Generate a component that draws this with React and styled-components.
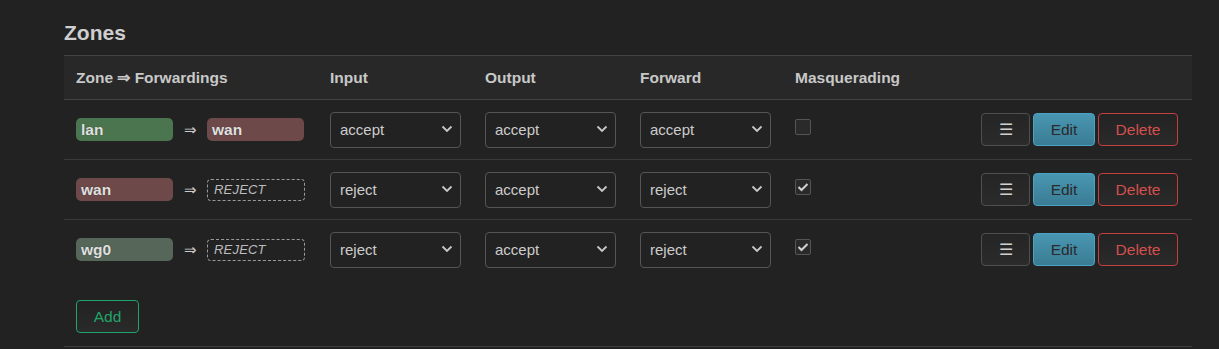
import styled, { createGlobalStyle } from 'styled-components';

const GlobalStyle = createGlobalStyle`
  html, body {
    margin: 0;
    padding: 0;
    background: #222222;
    color: #cccccc;
    font-family: "Liberation Sans", Arial, sans-serif;
  }
`;

const Page = styled.div`
  padding: 20px 27px 0 64px;
`;

const Title = styled.h2`
  margin: 0 0 9px;
  font-size: 21px;
  line-height: 26px;
  font-weight: bold;
  color: #cfcfcf;
`;

const Section = styled.div`
  border-bottom: 1px solid #3f3f3f;
  padding-bottom: 13px;
`;

const Grid = styled.div`
  display: grid;
  grid-template-columns: 254px 155px 155px 155px 1fr auto;
`;

const HeadCell = styled.div`
  background: #282828;
  border-top: 1px solid #424242;
  border-bottom: 1px solid #424242;
  height: 43px;
  display: flex;
  align-items: center;
  padding-left: 12px;
  font-size: 15.5px;
  font-weight: bold;
  color: #c8c8c8;
`;

const Cell = styled.div`
  height: 59px;
  display: flex;
  align-items: center;
  padding-left: 12px;
  border-bottom: ${p => (p.$last ? '1px solid transparent' : '1px solid #3a3a3a')};
  justify-content: ${p => (p.$right ? 'flex-end' : 'flex-start')};
  padding-right: ${p => (p.$right ? '14px' : '0')};
  gap: ${p => (p.$right ? '3px' : '0')};
`;

const zoneColors = {
  lan: '#4b754e',
  wan: '#6d4a49',
  wg0: '#566659',
};

const Badge = styled.span`
  box-sizing: border-box;
  width: 97px;
  height: 23px;
  border-radius: 5px;
  padding-left: 5px;
  display: flex;
  align-items: center;
  font-size: 15.5px;
  font-weight: bold;
  color: #e0e0e0;
  text-shadow: 0 0 1px rgba(0, 0, 0, 0.5);
  background: ${p => zoneColors[p.$zone] || '#555'};
`;

const Reject = styled.span`
  box-sizing: border-box;
  width: 98px;
  height: 22px;
  border: 1px dashed #9a9a9a;
  border-radius: 4px;
  padding-left: 6px;
  display: flex;
  align-items: center;
  font-size: 13px;
  font-style: italic;
  color: #bdbdbd;
  letter-spacing: 0.2px;
`;

const Arrow = styled.span`
  width: 34px;
  text-align: center;
  font-size: 15px;
  color: #cccccc;
`;

const SelectWrap = styled.div`
  position: relative;
  width: 131px;
  height: 36px;
`;

const Select = styled.select`
  appearance: none;
  box-sizing: border-box;
  width: 100%;
  height: 100%;
  background: #222222;
  border: 1px solid #555555;
  border-radius: 4px;
  color: #cccccc;
  font-family: "Liberation Sans", Arial, sans-serif;
  font-size: 15px;
  padding: 0 0 0 9px;
  outline: none;
`;

const Chevron = styled.svg`
  position: absolute;
  right: 8px;
  top: 13px;
  pointer-events: none;
`;

const Check = styled.span`
  box-sizing: border-box;
  width: 16px;
  height: 16px;
  margin-top: -5px;
  border: 1px solid #555555;
  border-radius: 2px;
  background: #2a2a2a;
  display: flex;
  align-items: center;
  justify-content: center;
`;

const Btn = styled.button`
  box-sizing: border-box;
  height: 33px;
  border-radius: 4px;
  font-family: "Liberation Sans", Arial, sans-serif;
  font-size: 15.5px;
  padding: 0;
  cursor: pointer;
`;

const MenuBtn = styled(Btn)`
  width: 49px;
  border: 1px solid #4f4f4f;
  background: linear-gradient(#252525, #2b2b2b);
  color: #d0d0d0;
  font-size: 16px;
`;

const EditBtn = styled(Btn)`
  width: 62px;
  border: 1px solid #4aa3c3;
  background: linear-gradient(#4896b2, #3b7c94);
  color: #2a2a2a;
`;

const DeleteBtn = styled(Btn)`
  width: 80px;
  border: 1px solid #c2403e;
  background: linear-gradient(#232323, #2a2a2a);
  color: #d4504c;
`;

const AddBtn = styled(Btn)`
  margin: 20px 0 0 12px;
  width: 63px;
  border: 1px solid #1fa46c;
  background: linear-gradient(#222, #2a2a2a);
  color: #21a46a;
`;

const zones = [
  { name: 'lan', fwd: 'wan', input: 'accept', output: 'accept', forward: 'accept', masq: false },
  { name: 'wan', fwd: null, input: 'reject', output: 'accept', forward: 'reject', masq: true },
  { name: 'wg0', fwd: null, input: 'reject', output: 'accept', forward: 'reject', masq: true },
];

const Policy = ({ value }) => (
  <SelectWrap>
    <Select defaultValue={value}>
      <option value="reject">reject</option>
      <option value="drop">drop</option>
      <option value="accept">accept</option>
    </Select>
    <Chevron width="12" height="8" viewBox="0 0 12 8">
      <path d="M1.5 1.5 L6 6 L10.5 1.5" fill="none" stroke="#c8c8c8" strokeWidth="1.8" />
    </Chevron>
  </SelectWrap>
);

const App = () => {
  return (
    <>
      <GlobalStyle />
      <Page>
        <Title>Zones</Title>
        <Section>
          <Grid>
            <HeadCell>Zone ⇒ Forwardings</HeadCell>
            <HeadCell>Input</HeadCell>
            <HeadCell>Output</HeadCell>
            <HeadCell>Forward</HeadCell>
            <HeadCell>Masquerading</HeadCell>
            <HeadCell />
            {zones.map((z, i) => {
              const last = i === zones.length - 1;
              return [
                <Cell key={z.name + 'z'} $last={last}>
                  <Badge $zone={z.name}>{z.name}</Badge>
                  <Arrow>⇒</Arrow>
                  {z.fwd ? <Badge $zone={z.fwd}>{z.fwd}</Badge> : <Reject>REJECT</Reject>}
                </Cell>,
                <Cell key={z.name + 'i'} $last={last}><Policy value={z.input} /></Cell>,
                <Cell key={z.name + 'o'} $last={last}><Policy value={z.output} /></Cell>,
                <Cell key={z.name + 'f'} $last={last}><Policy value={z.forward} /></Cell>,
                <Cell key={z.name + 'm'} $last={last}>
                  <Check>
                    {z.masq && (
                      <svg width="12" height="10" viewBox="0 0 12 10">
                        <path d="M1.5 5 L4.5 8 L10.5 2" fill="none" stroke="#d0d0d0" strokeWidth="2" />
                      </svg>
                    )}
                  </Check>
                </Cell>,
                <Cell key={z.name + 'a'} $last={last} $right>
                  <MenuBtn>☰</MenuBtn>
                  <EditBtn>Edit</EditBtn>
                  <DeleteBtn>Delete</DeleteBtn>
                </Cell>,
              ];
            })}
          </Grid>
          <AddBtn>Add</AddBtn>
        </Section>
      </Page>
    </>
  );
};

export default App;
